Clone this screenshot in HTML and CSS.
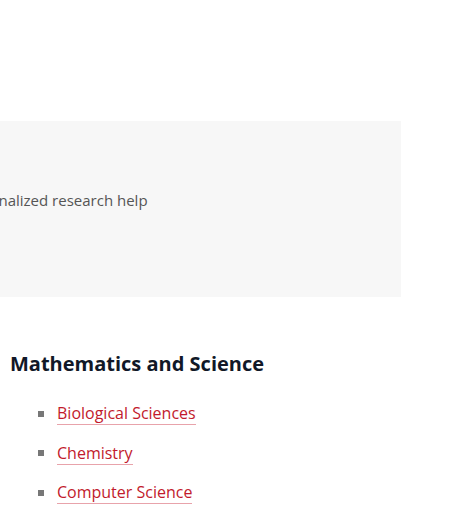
FILE: index.html
```html
<!DOCTYPE html>
<html lang="en">
<head>
<meta charset="utf-8">
<title>Research help</title>
<link rel="stylesheet" href="styles.css">
</head>
<body>
<section class="promo">
  <p class="promo-text">Get personalized research help</p>
</section>
<section class="subjects">
  <h2 class="subjects-title">Mathematics and Science</h2>
  <ul class="subject-list">
    <li class="subject-item"><a class="subject-link" href="#">Biological Sciences</a></li>
    <li class="subject-item"><a class="subject-link" href="#">Chemistry</a></li>
    <li class="subject-item"><a class="subject-link" href="#">Computer Science</a></li>
  </ul>
</section>
</body>
</html>
```

FILE: styles.css
```css
html, body {
  margin: 0;
  padding: 0;
  background: #ffffff;
  overflow: hidden;
}
body {
  font-family: "Open Sans", "Noto Sans", sans-serif;
  padding-top: 121px;
}
.promo {
  background: #f7f7f7;
  margin-left: -300px;
  width: 701px;
  height: 176px;
  display: flex;
  align-items: center;
  box-sizing: border-box;
  padding-left: 230px;
  padding-bottom: 18px;
}
.promo-text {
  margin: 0;
  font-size: 15px;
  color: #555555;
}
.subjects {
  padding-left: 10px;
  padding-top: 53px;
}
.subjects-title {
  margin: 0;
  font-size: 20px;
  font-weight: 700;
  color: #111827;
  line-height: 28px;
}
.subject-list {
  list-style: none;
  margin: 24px 0 0 0;
  padding: 0 0 0 28px;
  display: flex;
  flex-direction: column;
  gap: 16.5px;
}
.subject-item {
  display: flex;
  align-items: center;
  gap: 13px;
  font-size: 16px;
  line-height: 22px;
}
.subject-item::before {
  content: "";
  width: 6px;
  height: 6px;
  background: #777777;
}
.subject-link {
  color: #c21a2c;
  text-decoration: none;
  border-bottom: 1px solid #e8a3ab;
}
```
